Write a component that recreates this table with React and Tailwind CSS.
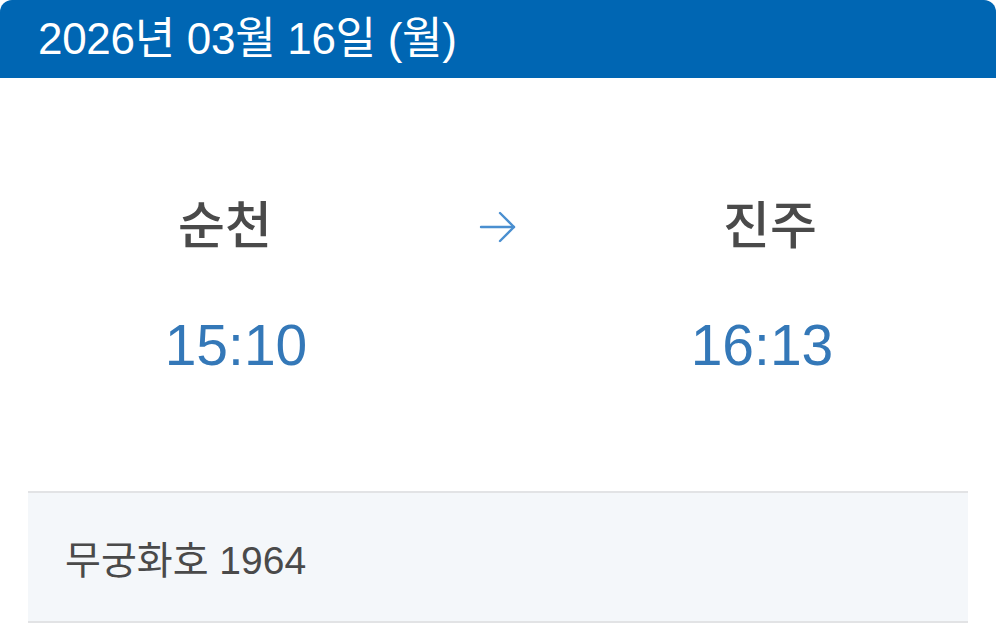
const FONT = { fontFamily: '"Liberation Sans", "Noto Sans CJK KR", sans-serif' };

const Station = ({ name, time, nameClass, timeClass }) => (
    <div className="w-[200px] flex flex-col items-center">
        <div className={`h-[56px] leading-[56px] text-[51px] font-medium text-[#4a4a4a] ${nameClass}`}>{name}</div>
        <div className={`h-[64px] leading-[64px] mt-[58px] text-[57px] text-[#3478b8] ${timeClass}`}>{time}</div>
    </div>
);

export default function App() {
    return (
        <div className="w-[996px] h-[624px] bg-white overflow-hidden" style={FONT}>
            <div className="h-[78px] bg-[#0066b3] rounded-t-[12px] flex items-center px-[38px]">
                <span className="text-white text-[44px] leading-none tracking-[-0.3px]">2026년 03월 16일 (월)</span>
            </div>

            <div className="flex justify-center gap-[148px] pt-[121px] pb-[114px]">
                <Station name="순천" time="15:10" nameClass="mr-[10px]" timeClass="ml-[12px]" />
                <div className="w-[40px] h-[56px] flex items-center justify-center">
                    <svg width="38" height="34" viewBox="0 0 38 34" fill="none" stroke="#4a8fd0" strokeWidth="2.4" strokeLinecap="round" strokeLinejoin="round">
                        <line x1="2" y1="17" x2="35" y2="17" />
                        <polyline points="21,3 35,17 21,31" />
                    </svg>
                </div>
                <Station name="진주" time="16:13" nameClass="ml-[8px]" timeClass="mr-[8px]" />
            </div>

            <div className="mx-[28px] h-[132px] border-y-2 border-[#e2e3e5] bg-[#f4f7fa] flex items-center px-[37px] pt-[6px]">
                <span className="text-[39px] text-[#4a4a4a] leading-none">무궁화호 1964</span>
            </div>
        </div>
    );
}
